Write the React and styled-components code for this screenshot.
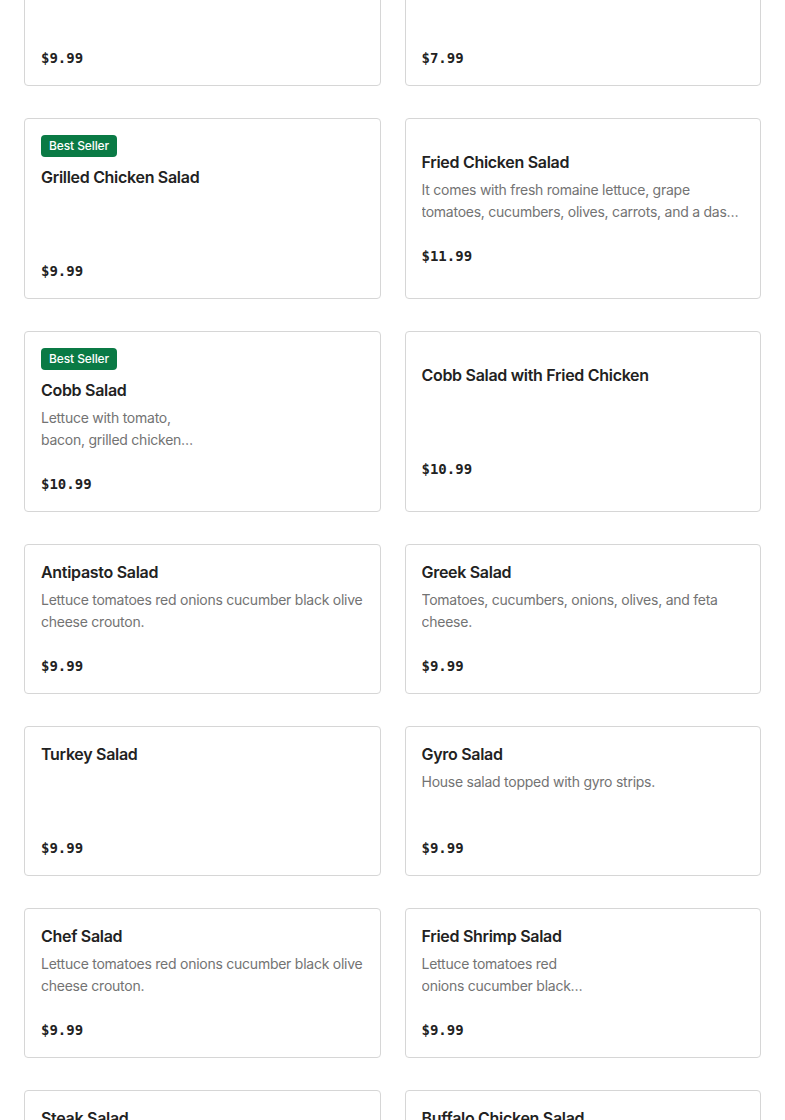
import React from "react";
import styled, { createGlobalStyle } from "styled-components";

const Global = createGlobalStyle`
  html, body { margin: 0; padding: 0; background: #ffffff; }
  body { font-family: Inter, "Noto Sans", sans-serif; color: #1f1f1f; }
`;

const Page = styled.main`
  padding: 0 24px;
  overflow: hidden;
  height: 1120px;
`;

const Grid = styled.div`
  display: grid;
  grid-template-columns: 1fr 1fr;
  column-gap: 24px;
  row-gap: 32px;
  margin-top: -64px;
`;

const Card = styled.article`
  border: 1px solid #d6d6d6;
  border-radius: 4px;
  padding: 16px;
  display: flex;
  flex-direction: column;
  justify-content: center;
  background: #fff;
`;

const Badge = styled.span`
  align-self: flex-start;
  height: 22px;
  line-height: 22px;
  padding: 0 8px;
  border-radius: 4px;
  background: #0a7a45;
  color: #fff;
  font-size: 12px;
  font-weight: 500;
  letter-spacing: -0.1px;
  margin-bottom: 9px;
`;

const Title = styled.h3`
  margin: 0;
  font-size: 16px;
  line-height: 23px;
  font-weight: 600;
  letter-spacing: -0.3px;
  color: #222222;
`;

const Desc = styled.p`
  margin: 5px 0 0;
  font-size: 14px;
  line-height: 22px;
  letter-spacing: -0.25px;
  min-height: 44px;
  color: #737373;
  white-space: pre-line;
  display: -webkit-box;
  -webkit-line-clamp: 2;
  -webkit-box-orient: vertical;
  overflow: hidden;
`;

const Price = styled.div`
  margin-top: 22px;
  font-family: "DejaVu Sans Mono", "Liberation Mono", monospace;
  font-weight: bold;
  font-size: 14px;
  line-height: 22px;
  color: #222222;
`;

const items = [
  { title: "House Salad", price: "$9.99" },
  { title: "Side Salad", price: "$7.99" },
  { title: "Grilled Chicken Salad", price: "$9.99", best: true },
  {
    title: "Fried Chicken Salad",
    desc: "It comes with fresh romaine lettuce, grape tomatoes, cucumbers, olives, carrots, and a dash of croutons.",
    price: "$11.99",
  },
  {
    title: "Cobb Salad",
    desc: "Lettuce with tomato,\nbacon, grilled chicken\negg, and blue cheese.",
    price: "$10.99",
    best: true,
  },
  { title: "Cobb Salad with Fried Chicken", price: "$10.99" },
  { title: "Antipasto Salad", desc: "Lettuce tomatoes red onions cucumber black olive cheese crouton.", price: "$9.99" },
  { title: "Greek Salad", desc: "Tomatoes, cucumbers, onions, olives, and feta cheese.", price: "$9.99" },
  { title: "Turkey Salad", price: "$9.99" },
  { title: "Gyro Salad", desc: "House salad topped with gyro strips.", price: "$9.99" },
  { title: "Chef Salad", desc: "Lettuce tomatoes red onions cucumber black olive cheese crouton.", price: "$9.99" },
  {
    title: "Fried Shrimp Salad",
    desc: "Lettuce tomatoes red\nonions cucumber black\nolive cheese crouton.",
    price: "$9.99",
  },
  { title: "Steak Salad", price: "$12.99" },
  { title: "Buffalo Chicken Salad", price: "$10.99" },
];

export default function App() {
  return (
    <>
      <Global />
      <Page>
        <Grid>
          {items.map((it) => (
            <Card key={it.title}>
              {it.best && <Badge>Best Seller</Badge>}
              <Title>{it.title}</Title>
              <Desc>{it.desc || ""}</Desc>
              <Price>{it.price}</Price>
            </Card>
          ))}
        </Grid>
      </Page>
    </>
  );
}
